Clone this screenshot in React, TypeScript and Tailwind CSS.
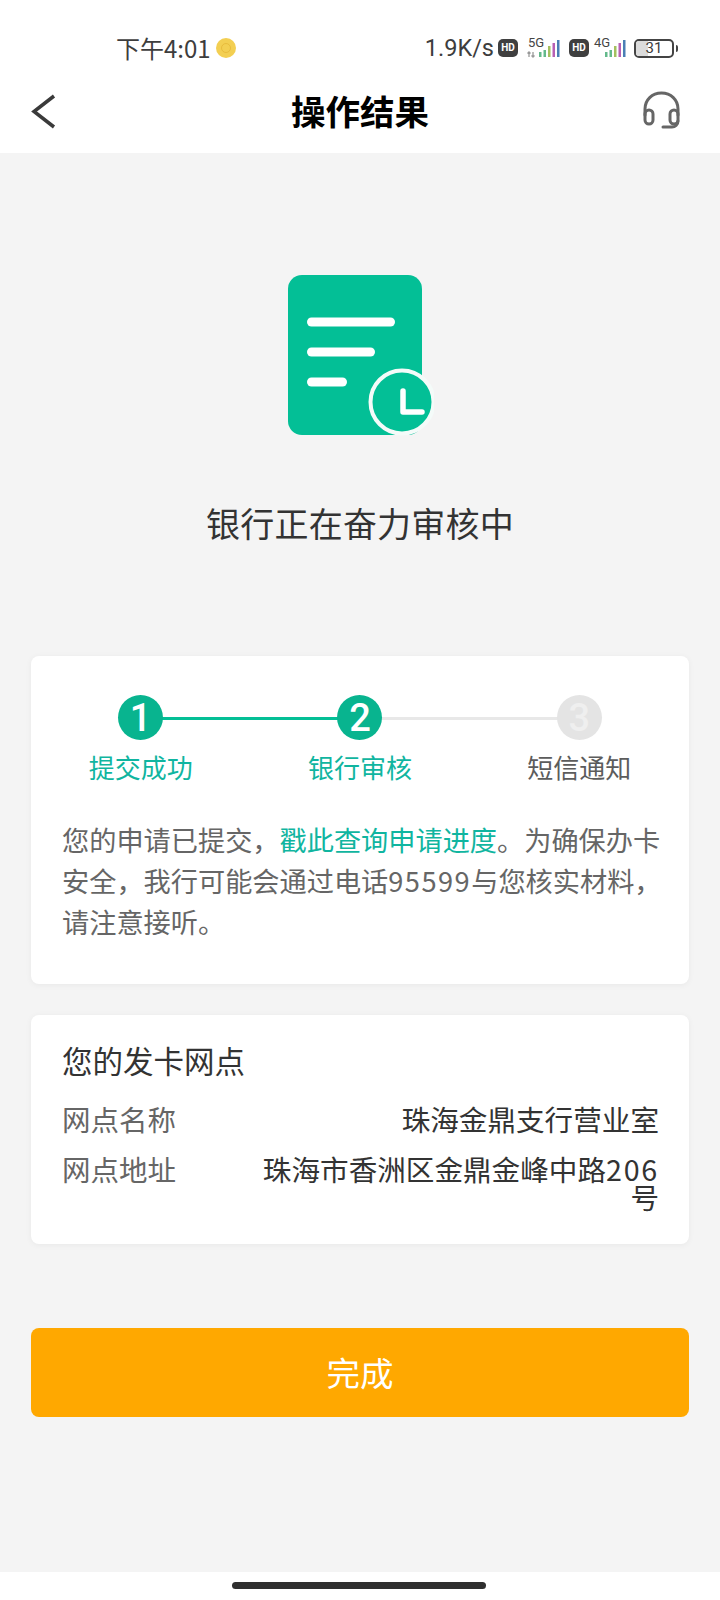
const Bars = ({ label, arrows }: { label: string; arrows?: boolean }) => (
  <div className="relative h-[20px] w-[34px]">
    <span className="absolute left-[2px] top-[-2px] font-['Roboto',sans-serif] text-[13px] leading-[14px] text-[#444]">{label}</span>
    <svg width="34" height="20" viewBox="0 0 34 20" className="absolute left-0 top-0">
      {arrows && <path d="M3 19v-5M1.5 15.5L3 14l1.5 1.5M7 14v5M5.5 17.5L7 19l1.5-1.5" stroke="#999" strokeWidth="1.3" fill="none" />}
      <rect x="13" y="14" width="2.5" height="5" fill="#63b98b" />
      <rect x="17.5" y="12" width="2.5" height="7" fill="#63b98b" />
      <rect x="22" y="8" width="2.5" height="11" fill="#a4c05f" />
      <rect x="26.5" y="5" width="2.5" height="14" fill="#b860b4" />
      <rect x="31" y="2" width="2.5" height="17" fill="#4a7fb5" />
    </svg>
  </div>
);

const Hd = () => (
  <span className="flex h-[18px] w-[20px] items-center justify-center rounded-[5px] bg-[#3f3f3f] font-['Roboto',sans-serif] text-[10px] font-bold leading-none text-white">
    HD
  </span>
);

const StatusBar = () => (
  <div className="flex h-[84px] items-end justify-between pb-[21px] pl-[116px] pr-[42px]">
    <div className="flex items-center text-[#3d3d3d]">
      <span className="text-[24px] leading-[30px]">下午4:01</span>
      <span className="ml-[5px] flex h-[20px] w-[20px] items-center justify-center rounded-full bg-[#f3cf52]">
        <span className="h-[10px] w-[10px] rounded-full border border-[#e8bc3c]" />
      </span>
    </div>
    <div className="flex items-center text-[#3d3d3d]">
      <span className="font-['Roboto',sans-serif] text-[23.5px] leading-[30px]">1.9K/s</span>
      <span className="ml-[4px]"><Hd /></span>
      <span className="ml-[8px]"><Bars label="5G" arrows /></span>
      <span className="ml-[9px]"><Hd /></span>
      <span className="ml-[3px] mr-[-2px]"><Bars label="4G" /></span>
      <div className="relative ml-[10px] flex h-[19px] w-[40px] items-center justify-center overflow-hidden rounded-[5px] border-2 border-[#444] font-['Roboto',sans-serif] text-[15px] leading-none">
        <span className="absolute bottom-0 left-0 top-0 w-[12px] bg-[#dcdcdc]" />
        <span className="relative">31</span>
      </div>
      <span className="ml-[2px] h-[7px] w-[2px] rounded-r-sm bg-[#444]" />
    </div>
  </div>
);

const Header = () => (
  <div className="relative flex h-[69px] items-start justify-center bg-white">
    <svg className="absolute left-[29px] top-[9px]" width="28" height="37" viewBox="0 0 28 37" fill="none" stroke="#3a3a3a" strokeWidth="3.5">
      <path d="M25 3L5 18.5L25 34" />
    </svg>
    <h1 className="text-[34.5px] font-bold leading-[52px] text-black">操作结果</h1>
    <svg className="absolute right-[39px] top-[7px]" width="39" height="39" viewBox="0 0 39 39" fill="none" stroke="#666" strokeWidth="3" strokeLinecap="round">
      <path d="M3 24V18C3 9 10 2 19.5 2S36 9 36 18v6" />
      <rect x="3" y="19" width="8" height="14" rx="4" />
      <rect x="28" y="19" width="8" height="14" rx="4" />
      <path d="M36 30c0 4-3 6-6 6h-9" />
    </svg>
  </div>
);

const DocIcon = () => (
  <svg width="148" height="164" viewBox="0 0 148 164">
    <rect x="2" y="1" width="134" height="160" rx="14" fill="#03bf96" />
    <rect x="21" y="43.5" width="88" height="9" rx="4.5" fill="#fff" />
    <rect x="21" y="73.5" width="68" height="9" rx="4.5" fill="#fff" />
    <rect x="21" y="103.5" width="40" height="9" rx="4.5" fill="#fff" />
    <circle cx="116" cy="128" r="31.5" fill="#03bf96" stroke="#f4fbf9" strokeWidth="4" />
    <path d="M117 117v21h19" fill="none" stroke="#fff" strokeWidth="5.5" strokeLinecap="round" strokeLinejoin="round" />
  </svg>
);

const steps = [
  { n: "1", label: "提交成功", on: true },
  { n: "2", label: "银行审核", on: true },
  { n: "3", label: "短信通知", on: false },
];

const Steps = () => (
  <div className="relative grid grid-cols-3">
    <span className="absolute left-[109px] top-[22px] h-[3px] w-[220px] bg-[#03bf96]" />
    <span className="absolute left-[329px] top-[22px] h-[3px] w-[220px] bg-[#e8e8e8]" />
    {steps.map((s) => (
      <div key={s.n} className="relative flex flex-col items-center">
        <span
          className={
            s.on
              ? "flex h-[45px] w-[45px] items-center justify-center rounded-full bg-[#08b48f] font-['Roboto',sans-serif] text-[38px] font-medium leading-none text-white"
              : "flex h-[45px] w-[45px] items-center justify-center rounded-full bg-[#e4e4e4] font-['Roboto',sans-serif] text-[38px] font-medium leading-none text-[#efefef]"
          }
        >
          {s.n}
        </span>
        <span className={s.on ? "mt-[8px] text-[26px] leading-[38px] text-[#10b5a0]" : "mt-[8px] text-[26px] leading-[38px] text-[#5c5c5c]"}>
          {s.label}
        </span>
      </div>
    ))}
  </div>
);

export default function App() {
  return (
    <div className="flex h-[1600px] w-[720px] flex-col bg-[#f4f4f4] font-['Noto_Sans_CJK_SC','Noto_Sans',sans-serif]">
      <div className="bg-white">
        <StatusBar />
        <Header />
      </div>

      <div className="flex flex-col items-center pt-[121px]">
        <DocIcon />
        <p className="mt-[60px] text-[34px] leading-[50px] tracking-[0.2px] text-[#333]">银行正在奋力审核中</p>
      </div>

      <div className="mt-[108px] flex flex-col gap-[31px] px-[31px]">
        <div className="h-[328px] rounded-[8px] bg-white pt-[39px] shadow-[0_1px_6px_rgba(0,0,0,0.05)]">
          <Steps />
          <p className="mt-[33px] pl-[31px] pr-[24px] text-[27.2px] leading-[40.8px] text-[#666]">
            您的申请已提交，<span className="text-[#10b5a0]">戳此查询申请进度</span>。为确保办卡安全，我行可能会通过电话<span className="tracking-[1.5px]">95599</span>与您核实材料，请注意接听。
          </p>
        </div>

        <div className="h-[229px] rounded-[8px] bg-white pl-[31px] pr-[30px] pt-[23px] shadow-[0_1px_6px_rgba(0,0,0,0.05)]">
          <h2 className="text-[30.5px] leading-[44px] text-[#333]">您的发卡网点</h2>
          <div className="mt-[16px] flex justify-between">
            <span className="text-[28.5px] leading-[42px] text-[#666]">网点名称</span>
            <span className="text-[28.6px] leading-[42px] text-[#333]">珠海金鼎支行营业室</span>
          </div>
          <div className="mt-[15px] flex justify-between">
            <span className="shrink-0 text-[28.5px] leading-[28px] text-[#666]">网点地址</span>
            <span className="w-[402px] text-right text-[28.6px] leading-[28px] text-[#333]">
              珠海市香洲区金鼎金峰中路<span className="tracking-[1.8px]">206</span>号
            </span>
          </div>
        </div>

        <button className="mt-[53px] h-[89px] rounded-[8px] bg-[#ffa800] text-[33.5px] text-white">完成</button>
      </div>

      <div className="mt-auto flex h-[28px] justify-center bg-white pr-[2px] pt-[10px]">
        <span className="h-[7px] w-[254px] rounded-full bg-[#2f2f2f]" />
      </div>
    </div>
  );
}
